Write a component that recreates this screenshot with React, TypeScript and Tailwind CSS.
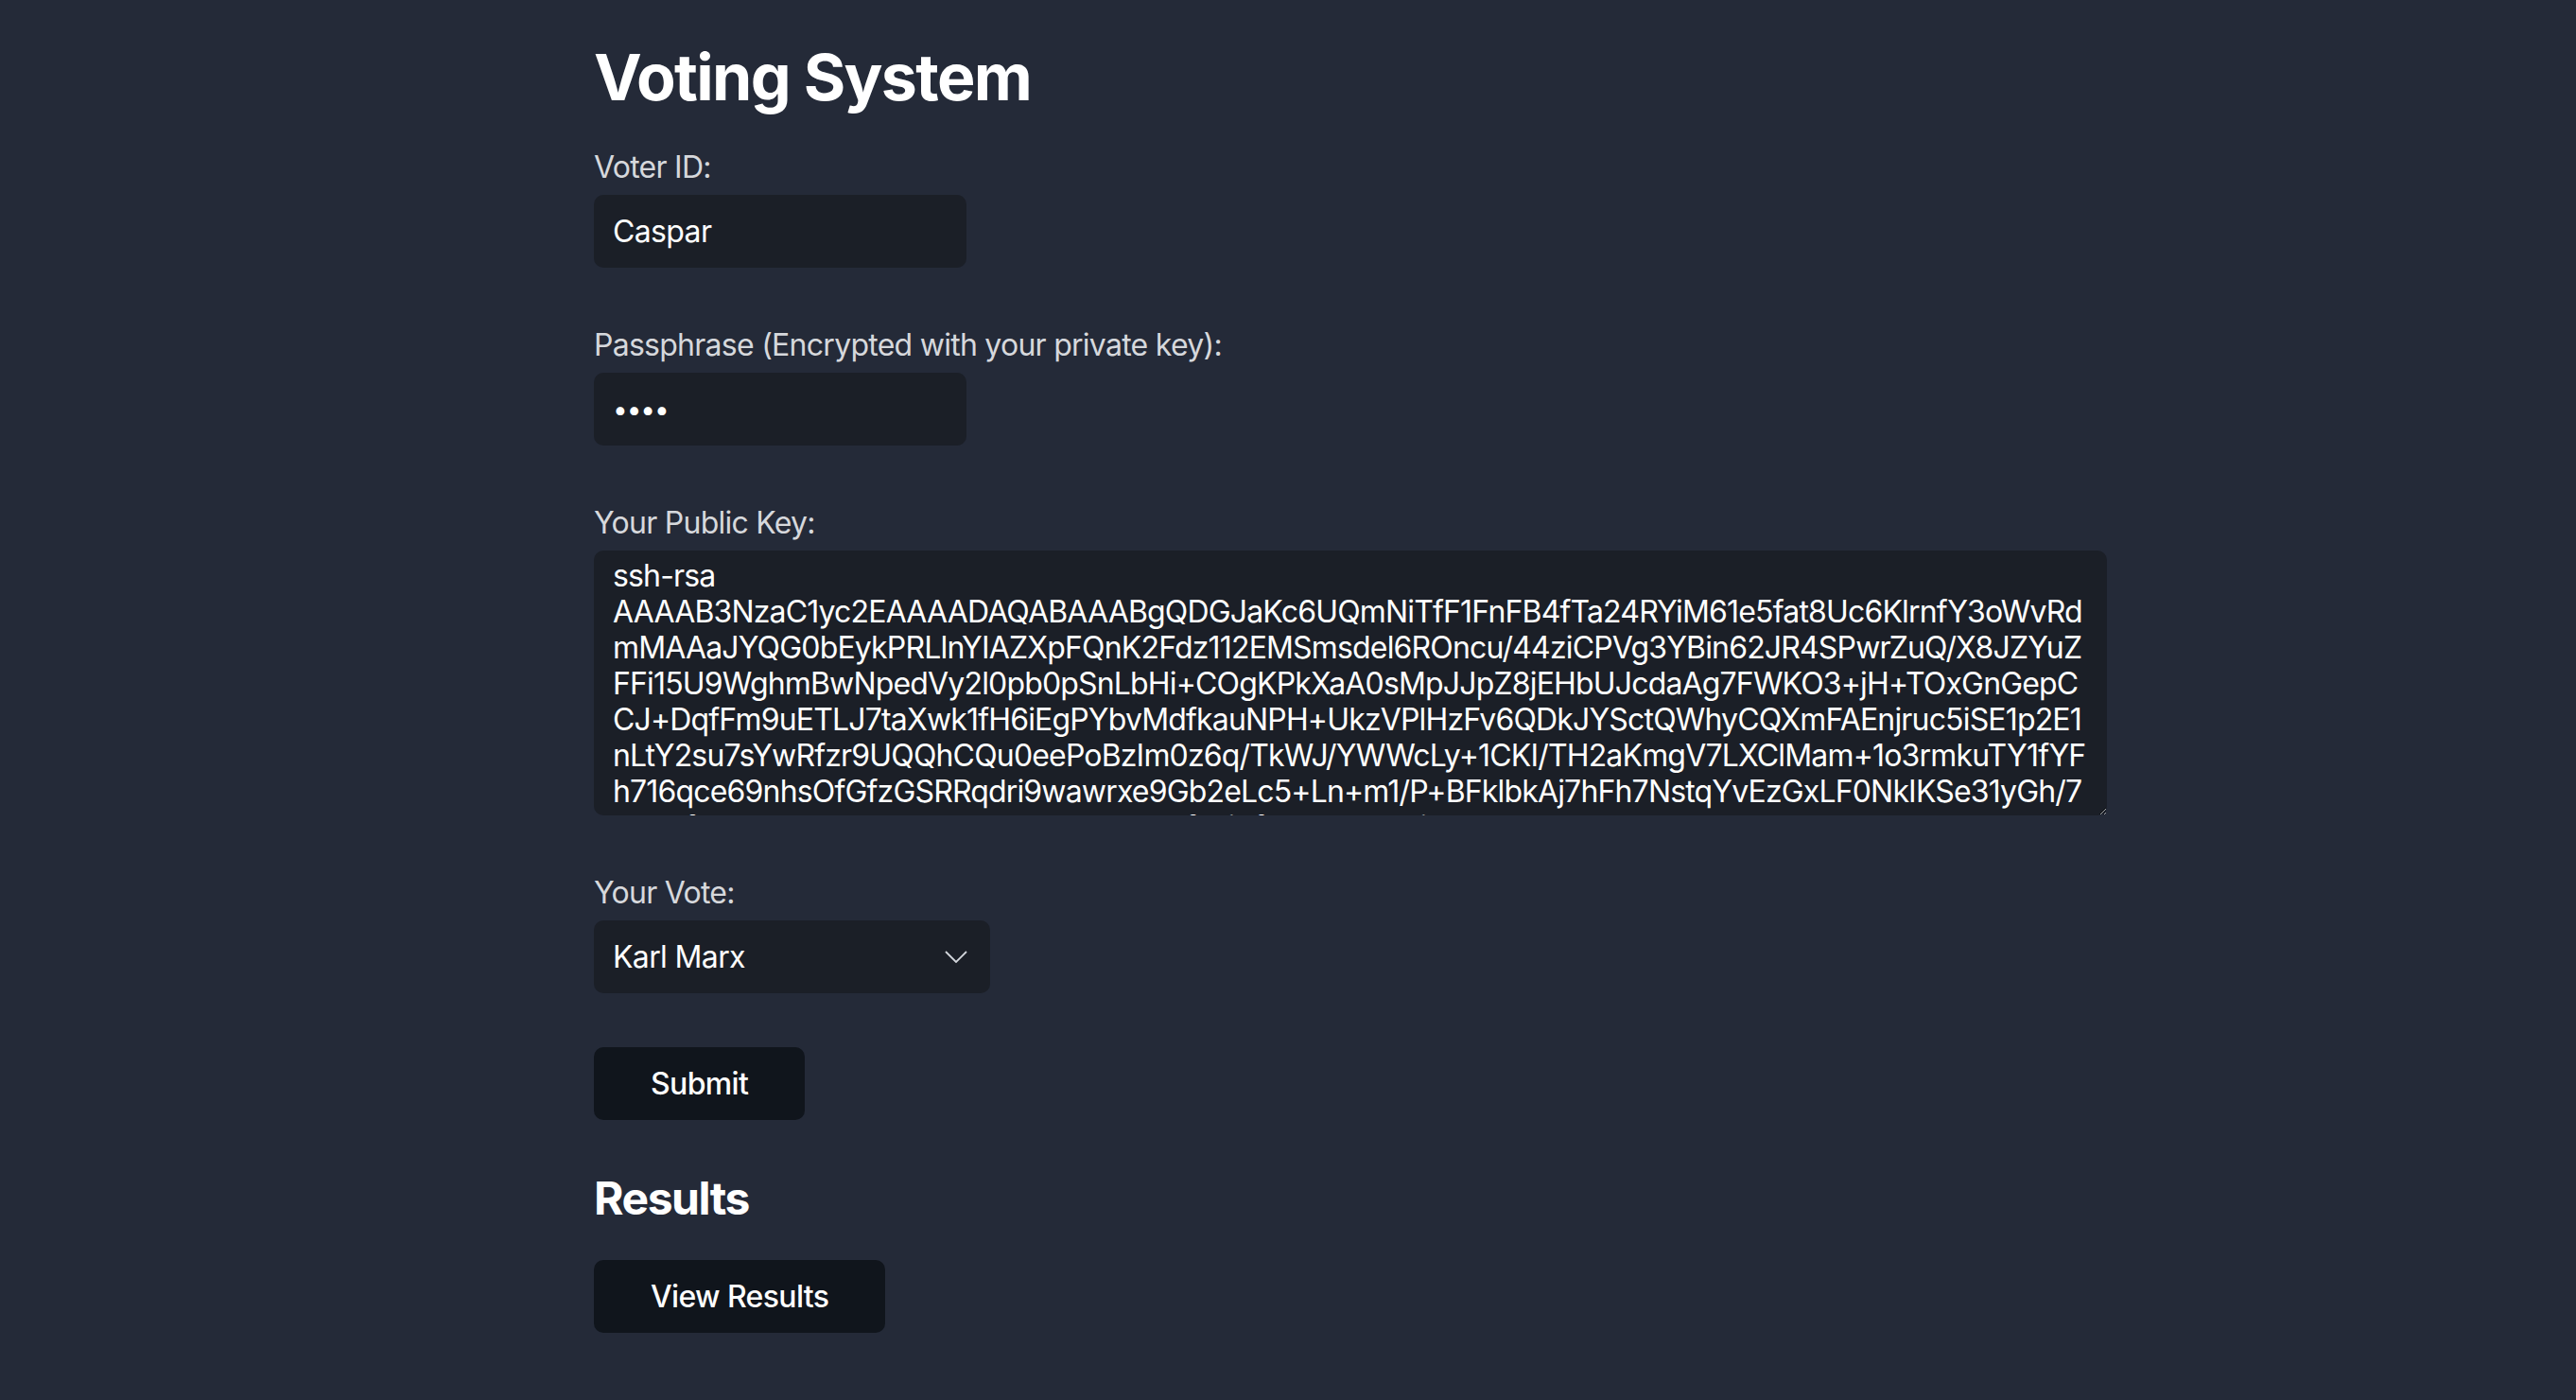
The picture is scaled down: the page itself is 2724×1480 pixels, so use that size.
import React, { useState } from 'react'

const PUBLIC_KEY = [
  'ssh-rsa',
  'AAAAB3NzaC1yc2EAAAADAQABAAABgQDGJaKc6UQmNiTfF1FnFB4fTa24RYiM61e5fat8Uc6KlrnfY3oWvRd',
  'mMAAaJYQG0bEykPRLlnYIAZXpFQnK2Fdz112EMSmsdel6ROncu/44ziCPVg3YBin62JR4SPwrZuQ/X8JZYuZ',
  'FFi15U9WghmBwNpedVy2l0pb0pSnLbHi+COgKPkXaA0sMpJJpZ8jEHbUJcdaAg7FWKO3+jH+TOxGnGepC',
  'CJ+DqfFm9uETLJ7taXwk1fH6iEgPYbvMdfkauNPH+UkzVPlHzFv6QDkJYSctQWhyCQXmFAEnjruc5iSE1p2E1',
  'nLtY2su7sYwRfzr9UQQhCQu0eePoBzIm0z6q/TkWJ/YWWcLy+1CKI/TH2aKmgV7LXClMam+1o3rmkuTY1fYF',
  'h716qce69nhsOfGfzGSRRqdri9wawrxe9Gb2eLc5+Ln+m1/P+BFklbkAj7hFh7NstqYvEzGxLF0NkIKSe31yGh/7',
  'bJ8Kf4dhlbJkdl3hb1xk7VdQlhTbd0Kw2hbfgkj4fhbdkL8hd4jbKQhdlbJh2ldbhKdlhb3klhdLKhdl user@host',
].join('\n')

function Label({ children }: { children: React.ReactNode }) {
  return (
    <label className="block text-[32px] leading-[38px] tracking-[-0.023em] text-[#d6d8dc] mb-[10px]">
      {children}
    </label>
  )
}

export default function App() {
  const [voterId, setVoterId] = useState('Caspar')
  const [pass, setPass] = useState('abcd')
  const [key, setKey] = useState(PUBLIC_KEY)
  const [vote, setVote] = useState('Karl Marx')

  return (
    <div className="min-h-screen h-[1480px] bg-[#242a38] font-[Inter,sans-serif] text-white">
      <div className="ml-[628px] w-[1600px] pt-[40px]">
        <h1 className="text-[68px] leading-[82px] font-bold tracking-[-0.024em] mb-[36px]">Voting System</h1>

        <div className="mb-[63px]">
          <Label>Voter ID:</Label>
          <input
            className="w-[394px] h-[77px] rounded-[10px] bg-[#1b1f27] px-[20px] text-[32px] tracking-[-0.02em] text-white outline-none"
            value={voterId}
            onChange={(e) => setVoterId(e.target.value)}
          />
        </div>

        <div className="mb-[63px]">
          <Label>Passphrase (Encrypted with your private key):</Label>
          <input
            type="password"
            className="w-[394px] h-[77px] rounded-[10px] bg-[#1b1f27] px-[20px] text-[28px] tracking-[-0.04em] text-white outline-none"
            value={pass}
            onChange={(e) => setPass(e.target.value)}
          />
        </div>

        <div className="mb-[63px]">
          <Label>Your Public Key:</Label>
          <textarea
            wrap="off"
            className="block w-[1600px] h-[280px] rounded-[10px] bg-[#1b1f27] px-[20px] pt-[8px] text-[32px] leading-[38px] tracking-[-0.026em] text-white outline-none overflow-hidden"
            value={key}
            onChange={(e) => setKey(e.target.value)}
          />
        </div>

        <div className="mb-[57px]">
          <Label>Your Vote:</Label>
          <div className="relative w-[419px]">
            <select
              className="appearance-none w-[419px] h-[77px] rounded-[10px] bg-[#1b1f27] px-[20px] text-[32px] tracking-[-0.02em] text-white outline-none"
              value={vote}
              onChange={(e) => setVote(e.target.value)}
            >
              <option>Karl Marx</option>
              <option>Adam Smith</option>
              <option>John Maynard Keynes</option>
            </select>
            <svg
              className="absolute right-[24px] top-[32px] pointer-events-none"
              width="24"
              height="13"
              viewBox="0 0 24 13"
              fill="none"
            >
              <path d="M1 1l11 11L23 1" stroke="#d3d6dc" strokeWidth="1.8" />
            </svg>
          </div>
        </div>

        <button className="h-[77px] px-[60px] rounded-[10px] bg-[#10151c] text-[32px] font-medium tracking-[-0.02em] text-white mb-[54px]">
          Submit
        </button>

        <h2 className="text-[48px] leading-[58px] font-bold tracking-[-0.03em] mb-[36px]">Results</h2>

        <button className="h-[77px] px-[60px] rounded-[10px] bg-[#10151c] text-[32px] font-medium tracking-[-0.02em] text-white">
          View Results
        </button>
      </div>
    </div>
  )
}
